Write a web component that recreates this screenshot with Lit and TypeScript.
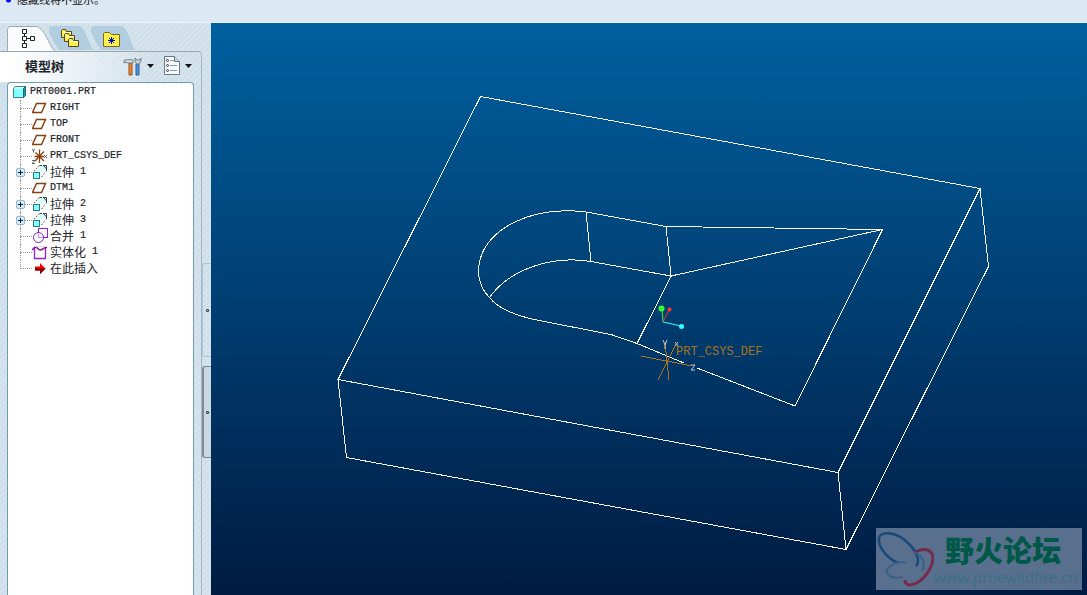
import { LitElement, html, svg, css } from "lit";
import { customElement, property } from "lit/decorators.js";

type Node = { icon: string; cjk?: string; latin?: string; open?: boolean };

const NODES: Node[] = [
  { icon: "plane", latin: "RIGHT" },
  { icon: "plane", latin: "TOP" },
  { icon: "plane", latin: "FRONT" },
  { icon: "csys", latin: "PRT_CSYS_DEF" },
  { icon: "extrude", cjk: "拉伸", latin: " 1", open: false },
  { icon: "plane", latin: "DTM1" },
  { icon: "extrude", cjk: "拉伸", latin: " 2", open: false },
  { icon: "extrude", cjk: "拉伸", latin: " 3", open: false },
  { icon: "merge", cjk: "合并", latin: " 1" },
  { icon: "solid", cjk: "实体化", latin: " 1" },
  { icon: "insert", cjk: "在此插入" },
];

const ICONS: Record<string, unknown> = {
  part: svg`<path d="M1.500 4.500 3.500 2.500H13.500V11.500L11.500 13.500H1.500Z" fill="#8ff" stroke="#2f8796"/><path d="M2 4.500 4 3H13L11 4.500Z" fill="#dff"/><path d="M11.500 4.500 13.500 2.500V11.500L11.500 13.500Z" fill="#2a98a4" stroke="#186878"/>`,
  plane: svg`<path d="M4.500 3.500H13.500L9.500 12.500H0.500Z" fill="none" stroke="#8b4010" stroke-width="1.500"/>`,
  csys: svg`<path d="M7.500 1.500V15M2.500 8.500H12M3.500 4.500 12 13M12 3.500 3 13" fill="none" stroke="#8b4010" stroke-width="1.300"/><path d="M0 1 1.500 3 3 1M1.500 3V4.500M0 12.500H3L0 15.500H3M12 7 15 10M15 7 12 10" fill="none" stroke="#666"/>`,
  extrude: svg`<path d="M2 7 7.500 1.500M9.500 13 14 7.500" fill="none" stroke="#444" stroke-dasharray="1.500 1.500"/><path d="M6 5 9 2H13V6L10 9V7H6Z" fill="#d4fafa"/><path d="M7.500 1.500H10M12 1.500H14.500V7M11 1 14.500 5" fill="none" stroke="#2b4448"/><rect x="1.500" y="8.500" width="6" height="6" fill="#8ff" stroke="#2a7c86"/>`,
  merge: svg`<rect x="6.500" y="0.500" width="9" height="9" fill="none" stroke="#8a20e0"/><circle cx="6.500" cy="9.500" r="5" fill="none" stroke="#8a20e0"/><path d="M6.500 5V9.500H11" fill="none" stroke="#c9a0f0"/>`,
  solid: svg`<path d="M2.500 4V14.500H13.500V4" fill="none" stroke="#9020e0" stroke-width="1.300"/><path d="M0 6 2.500 3.500C5 2 6 6 8.500 6S11 3 15 3.500" fill="none" stroke="#90109a" stroke-width="1.500"/><path d="M3 2.500H13" stroke="#ddd"/>`,
  insert: svg`<path d="M3 6.500H8V3L13.500 8.500 8 14V10.500H3Z" fill="#f00"/><path d="M3 8.500H13.500L8 14V10.500H3Z" fill="#800000"/>`,
};

@customElement("tree-icon")
class TreeIcon extends LitElement {
  @property() name = "";
  static styles = css`
    :host { display: block; width: 16px; height: 16px; flex: none; }
    svg { display: block; }
  `;
  render() {
    return html`<svg width="16" height="16" viewBox="0 0 16 16" aria-hidden="true">${ICONS[this.name]}</svg>`;
  }
}

@customElement("model-tree")
class ModelTree extends LitElement {
  static styles = css`
    :host { display: block; font: 12px/16px "Noto Sans CJK SC", sans-serif; color: #1c2329; }
    ul { list-style: none; margin: 0; padding: 0; }
    .root, .row { display: flex; align-items: center; height: 16px; }
    .root { gap: 2px; padding-left: 4px; }
    .row { padding-left: 7px; }
    .joint { display: flex; align-items: center; position: relative; width: 17px; height: 16px; }
    .joint::before { content: ""; position: absolute; left: 5px; top: 0; height: 16px; border-left: 1px dotted #999; }
    .row:last-child .joint::before { height: 9px; }
    .joint::after { content: ""; position: absolute; left: 5px; right: 0; top: 8px; border-top: 1px dotted #999; }
    .toggle { position: relative; z-index: 1; width: 9px; height: 9px; margin: 1px 0 0 1px; padding: 0; border: 1px solid #8db8cf; border-radius: 2px; background: #d5eaf6; }
    .toggle svg { display: block; width: 7px; height: 7px; }
    .label { display: flex; align-items: center; white-space: pre; padding-left: 2px; }
    .latin { font: 10px/18px "Liberation Mono", monospace; -webkit-text-stroke: 0.2px; }
  `;
  render() {
    return html`
      <div class="root"><tree-icon name="part"></tree-icon><span class="latin">PRT0001.PRT</span></div>
      <ul>
        ${NODES.map(
          (n) => html`<li class="row">
            <span class="joint">
              ${n.open === undefined
                ? ""
                : html`<button class="toggle" aria-label="展开"><svg viewBox="0 0 7 7"><path d="M1 3.500H6M3.500 1V6" stroke="#123"/></svg></button>`}
            </span>
            <tree-icon name=${n.icon}></tree-icon>
            <span class="label">${n.cjk ? html`<span>${n.cjk}</span>` : ""}${n.latin ? html`<span class="latin">${n.latin}</span>` : ""}</span>
          </li>`
        )}
      </ul>
    `;
  }
}

@customElement("model-view")
class ModelView extends LitElement {
  static styles = css`
    :host { display: block; position: relative; overflow: hidden; background: linear-gradient(#00609f, #001b42); }
    .scene { display: block; position: absolute; left: 0; top: 0; }
    .edges { fill: none; stroke: #fff; stroke-width: 1; shape-rendering: crispEdges; }
    .csys { fill: none; stroke: #a87420; stroke-width: 1; shape-rendering: crispEdges; }
    .axis { fill: none; stroke: #c4c4cc; stroke-width: 1; }
    .tag { font: 12px "Liberation Mono", monospace; fill: #a87420; }
    .mark { position: absolute; right: 5px; bottom: 5px; display: flex; align-items: center; box-sizing: border-box; width: 206px; height: 62px; background: #586f8d; }
    .mark svg { flex: none; }
    .words { display: flex; flex-direction: column; }
    .title { font: 900 29px/36px "Noto Sans CJK SC", sans-serif; color: #005848; padding-left: 11px; }
    .url { font: 15px/20px "Noto Sans", sans-serif; color: #3b6f86; text-decoration: none; }
  `;
  render() {
    return html`
      <svg class="scene" width="876" height="572" viewBox="211 23 876 572" role="img" aria-label="PRT0001">
        <g class="edges">
          <path d="M480.500 96.500 980 188.500 838 472.500 338 379.500ZM338 379.500 346.500 457.500 846 549.500 838 472.500M846 549.500 988.500 266.500 980 188.500"/>
          <path d="M586 212 666 226.500 882.500 229.500 795 406 697 368M684 363 637 343.500 611 334.500 534 319.500C510 314 496 306 489.500 297.500C478 286 477 271 480 260C487 230 530 205 586 212L591 261.500 671 276 666 226.500M489.500 297.500C510 269 552 255 591 261.500M882.500 229.500 671 276 637 343.500"/>
        </g>
        <g class="csys"><path d="M641 356 692 366M676 344 658 380M665 342 669 380"/></g>
        <path class="axis" d="M663 340 665 345 667 340M665 345V349M675 342 678 346M678 342 675 346M691 365H695L691 370H695"/>
        <text class="tag" x="676" y="355">PRT_CSYS_DEF</text>
        <path d="M663 322 662 309" stroke="#3f3"/><path d="M663 322 669 310" stroke="#f33"/><path d="M663 322 681 326" stroke="#3ff"/>
        <circle cx="661.500" cy="308.500" r="3" fill="#3f3"/><circle cx="669.500" cy="309.500" r="2" fill="#f33"/><circle cx="681.500" cy="326.500" r="2.500" fill="#3ff"/>
      </svg>
      <div class="mark">
        <svg width="58" height="62" viewBox="0 0 58 62" fill="none">
          <path d="M22 35C9 29 2 18 3 10C5 2 22 4 33 16C42 25 44 34 40 38" stroke="#174a7b" stroke-width="2.500"/>
          <path d="M38 25C48 19 57 21 57 31C55 45 43 57 33 57Q29 56 29 52" stroke="#762b4c" stroke-width="3"/>
          <path d="M38 24C47 28 50 36 46 43M27 49C17 51 10 48 11 42C13 37 22 32 30 35" stroke="#3c5f85" stroke-width="2"/>
        </svg>
        <div class="words"><span class="title">野火论坛</span><a class="url" href="#">www.proewildfire.cn</a></div>
      </div>
    `;
  }
}

@customElement("app-root")
class AppRoot extends LitElement {
  static styles = css`
    :host { display: flex; flex-direction: column; height: 100vh; overflow: hidden; font: 12px/16px "Noto Sans CJK SC", sans-serif; color: #1c2329; }
    .message { display: flex; align-items: flex-start; gap: 6px; flex: none; box-sizing: border-box; height: 23px; padding-left: 5px; background: #dce9f3; border-bottom: 1px solid #eef5fa; overflow: hidden; }
    .message span { margin-top: -9px; font-size: 11px; color: #111; }
    .message svg { flex: none; }
    .main { display: flex; flex: 1; min-height: 0; }
    .side { display: flex; flex-direction: column; width: 211px; flex: none; background: repeating-linear-gradient(135deg, #cfdfe9 0 2px, #d6e4ed 2px 4px); }
    .tabs { display: flex; height: 28px; padding: 3px 0 0 7px; box-sizing: border-box; flex: none; }
    .tab { width: 42px; height: 25px; padding: 0; border: 0; background: none; overflow: visible; }
    .tab svg { display: block; overflow: visible; }
    .body { display: flex; flex: 1; min-height: 0; }
    .panel { display: flex; flex-direction: column; flex: 1; min-width: 0; border-top: 1px solid #9ba6ad; border-right: 1px solid #a5b7c2; border-top-right-radius: 4px; padding-right: 7px; }
    .head { display: flex; align-items: center; box-sizing: border-box; height: 30px; flex: none; padding: 0 2px 2px 25px; background: linear-gradient(90deg, #fff 10px, #fff0 150px); }
    .head h1 { flex: 1; margin: 0; font: bold 13px/18px "Noto Sans CJK SC", sans-serif; }
    .tool { display: flex; align-items: center; gap: 4px; padding: 0; border: 0; background: none; margin-left: 9px; }
    .box { flex: 1; margin-left: 7px; border: 1px solid #6d9cb5; border-bottom: 0; border-radius: 4px 4px 0 0; background: #fff; padding-top: 1px; }
    .rail { display: flex; flex-direction: column; gap: 9px; width: 9px; flex: none; padding-top: 212px; }
    .grip { display: flex; align-items: center; justify-content: center; width: 9px; height: 94px; padding: 0; border: 1px solid #a5c8df; border-right: 0; border-radius: 3px 0 0 3px; background: none; box-sizing: border-box; }
    .sash { height: 92px; border-color: #7c8b96; border-left-width: 2px; background: #c9d8e2; }
    .grip::before { content: ""; width: 1px; height: 1px; border: 1px solid #233; border-radius: 1px; }
    model-view { flex: 1; min-width: 0; }
  `;
  private caret() {
    return html`<svg width="7" height="4" viewBox="0 0 7 4" aria-hidden="true"><path d="M0 0H7L3.500 4Z" fill="#111"/></svg>`;
  }
  private folder(x: number, y: number) {
    return svg`<g transform="translate(${x} ${y})"><path d="M0.500 8.500V1.500L1.500 0.500H4.500L5.500 2.500H10.500V8.500Z" fill="#ffec50" stroke="#504820"/><path d="M1.500 3.500H10" stroke="#fffbc0"/></g>`;
  }
  render() {
    return html`
      <div class="message" role="status">
        <svg width="6" height="4" viewBox="0 0 6 4" aria-hidden="true"><circle cx="3.500" cy="0" r="2.500" fill="#00f"/></svg>
        <span>隐藏线将不显示。</span>
      </div>
      <div class="main">
        <aside class="side">
          <nav class="tabs">
            <button class="tab" aria-label="模型树">
              <svg width="42" height="26" viewBox="0 0 42 26">
                <path d="M0.500 26V3.500Q0.500 0.500 3.500 0.500H29C34 0.500 38 8 43 18Q46 24 49 26" fill="#fafcfd" stroke="#a0abb2"/>
                <path d="M17.500 8V17M19 12.500H23" stroke="#222"/><path d="M15.500 3.500h4v4h-4zM15.500 10.500h4v4h-4zM15.500 17.500h4v4h-4zM23.500 10.500h4v4h-4z" fill="#fff" stroke="#222"/>
              </svg>
            </button>
            <button class="tab" aria-label="文件夹浏览器">
              <svg width="42" height="26" viewBox="0 0 42 26">
                <path d="M0 3Q0 0 3 0H29C36 0 38 12 44 24H10Q4 16 0 6Z" fill="#b2cde0"/>
                ${this.folder(12, 3)}${this.folder(15, 7)}${this.folder(19, 12)}
              </svg>
            </button>
            <button class="tab" aria-label="收藏夹">
              <svg width="42" height="26" viewBox="0 0 42 26">
                <path d="M0 3Q0 0 3 0H29C36 0 38 12 44 24H10Q4 16 0 6Z" fill="#b2cde0"/>
                <path d="M12.500 20.500V7.500L13.500 6.500H18.500L20.500 8.500H28.500V20.500Z" fill="#fff04a" stroke="#777018"/>
                <path d="M20.500 11V18M17 14.500H24M18 12 23 17M23 12 18 17" stroke="#0010b0"/>
              </svg>
            </button>
          </nav>
          <div class="body">
            <section class="panel">
              <header class="head">
                <h1>模型树</h1>
                <button class="tool" aria-label="设置">
                  <svg width="20" height="20" viewBox="0 0 20 20">
                    <path d="M6 7H9V19H6Z" fill="#e88a3c" stroke="#a04a18"/><path d="M1 7V4.500Q4 3 10 4V7H5L3 6Z" fill="#d4e2e6" stroke="#6f8086"/>
                    <path d="M13 8H16V19H13Z" fill="#4a9ae8" stroke="#2a5c96"/><path d="M12 2V5L13.500 8H16L18 5V2L16 4H14Z" fill="#c9d4d9" stroke="#6f8086"/>
                  </svg>${this.caret()}
                </button>
                <button class="tool" aria-label="显示">
                  <svg width="18" height="20" viewBox="0 0 18 20">
                    <path d="M1.500 0.500H11.500L16.500 5.500V18.500H1.500Z" fill="#f7fbff" stroke="#667a90"/><path d="M11.500 0.500V5.500H16.500" fill="#cbd8e5" stroke="#667a90"/>
                    <path d="M7 4.500H11M7 9.500H14M7 14.500H14" stroke="#8899aa"/><circle cx="4.500" cy="4.500" r="1" stroke="#334" fill="none"/><circle cx="4.500" cy="9.500" r="1" stroke="#334" fill="none"/><circle cx="4.500" cy="14.500" r="1" stroke="#334" fill="none"/>
                  </svg>${this.caret()}
                </button>
              </header>
              <div class="box"><model-tree></model-tree></div>
            </section>
            <div class="rail">
              <button class="grip" aria-label="折叠"></button>
              <button class="grip sash" aria-label="调整宽度"></button>
            </div>
          </div>
        </aside>
        <model-view></model-view>
      </div>
    `;
  }
}
